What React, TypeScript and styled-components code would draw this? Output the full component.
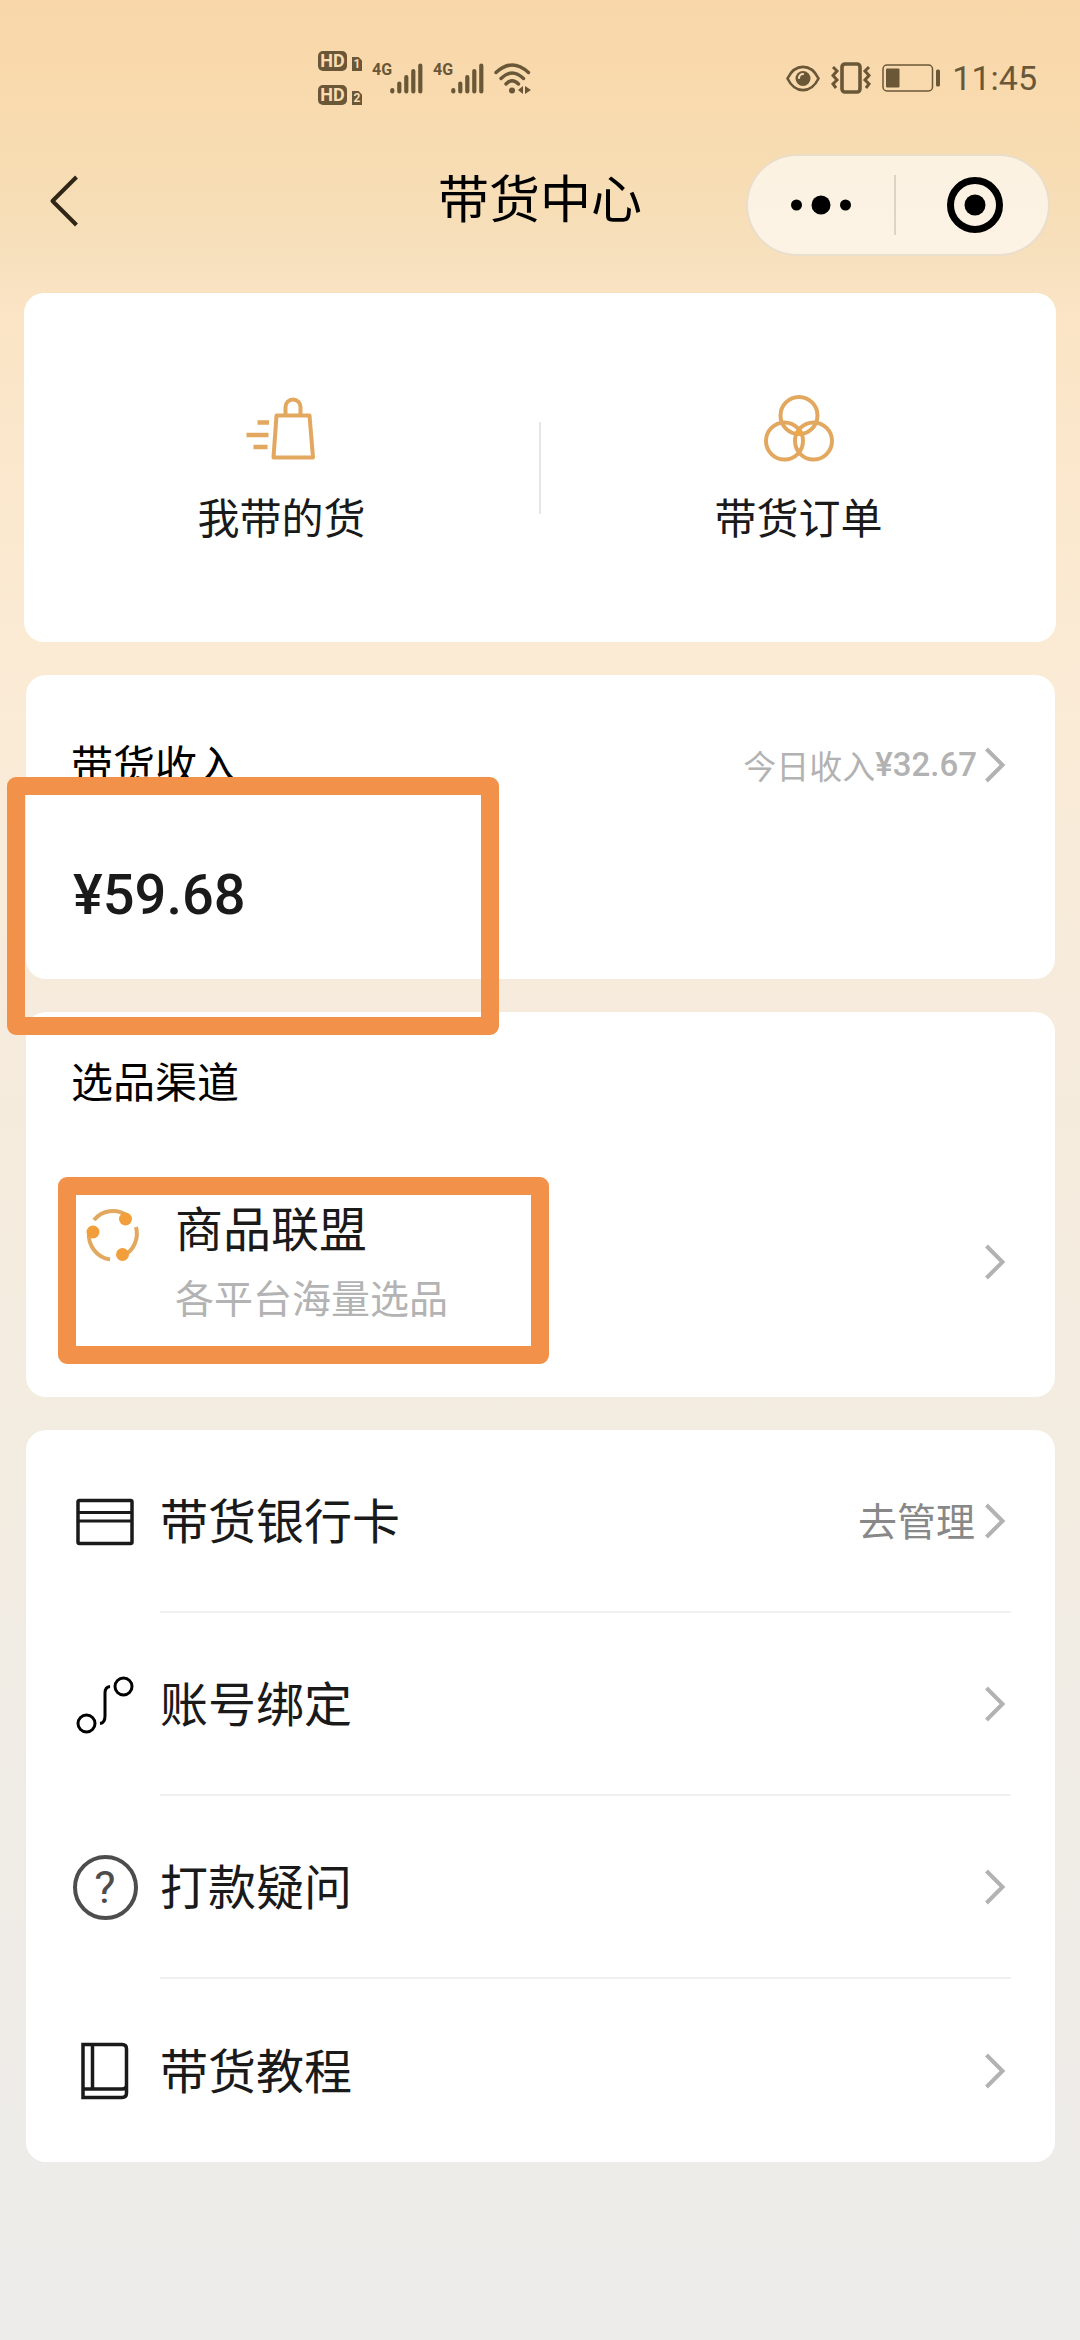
import React from "react";
import styled, { createGlobalStyle } from "styled-components";

const cjk = '"Noto Sans CJK SC", sans-serif';
const latin = 'Roboto, "Noto Sans CJK SC", sans-serif';
const statusInk = "#6a5737";
const gold = "#e3a85f";

const GlobalStyle = createGlobalStyle`
  *, *::before, *::after { box-sizing: border-box; }
  body {
    margin: 0;
    background: #edece9;
    font-family: ${cjk};
    color: #1a1a1a;
  }
  h1, h2, p, ul { margin: 0; padding: 0; font-weight: 400; }
  button { border: 0; padding: 0; background: none; font: inherit; color: inherit; }
  a { color: inherit; text-decoration: none; }
  svg { display: block; flex: none; }
`;

const Page = styled.div`
  min-height: 100vh;
  overflow-x: hidden;
  background: linear-gradient(
    180deg,
    #f9d7a9 0,
    #f8dcb1 150px,
    #f6dfba 240px,
    #fae4c5 310px,
    #fbebd5 660px,
    #f6ebdc 1000px,
    #f3ece0 1410px,
    #f0ece6 1800px,
    #edecea 100%
  );
`;

const StatusBar = styled.div`
  display: flex;
  align-items: center;
  justify-content: space-between;
  height: 154px;
  padding: 2px 43px 0 318px;
  color: ${statusInk};
  font-family: ${latin};
`;

const StatusGroup = styled.div<{ $gap: number }>`
  display: flex;
  align-items: center;
  gap: ${(p) => p.$gap}px;
`;

const HdStack = styled.div`
  display: flex;
  flex-direction: column;
  gap: 14px;
`;

const HdLine = styled.div`
  display: flex;
  align-items: flex-end;
  gap: 5px;
  color: #f9dcb2;
  font-weight: 700;
`;

const HdTag = styled.span`
  width: 29px;
  height: 20px;
  border-radius: 5px;
  background: ${statusInk};
  font-size: 18px;
  line-height: 20px;
  text-align: center;
`;

const SimTag = styled.span`
  width: 10px;
  height: 14px;
  background: ${statusInk};
  clip-path: polygon(0 0, 65% 0, 100% 25%, 100% 100%, 0 100%);
  font-size: 12px;
  line-height: 14px;
  text-align: center;
`;

const Network = styled.div`
  display: flex;
  align-items: flex-start;
`;

const NetworkLabel = styled.span`
  width: 18px;
  font-size: 16px;
  font-weight: 700;
  line-height: 14px;
`;

const Clock = styled.span`
  font-size: 34px;
  line-height: 40px;
`;

const NavBar = styled.header`
  display: grid;
  grid-template-columns: 1fr auto 1fr;
  align-items: start;
  padding: 0 30px 37px;
`;

const BackButton = styled.button`
  display: flex;
  align-items: center;
  width: 62px;
  height: 94px;
  padding-left: 14px;
`;

const Title = styled.h1`
  font-size: 51px;
  line-height: 84px;
  color: #000;
`;

const Capsule = styled.div`
  justify-self: end;
  display: flex;
  align-items: center;
  width: 304px;
  height: 102px;
  border: 2px solid rgba(120, 90, 50, 0.14);
  border-radius: 51px;
  background: rgba(255, 255, 255, 0.62);
`;

const CapsuleButton = styled.button`
  flex: 1;
  display: flex;
  align-items: center;
  justify-content: center;
  height: 100%;

  & + & {
    position: relative;
    padding-left: 8px;
  }
  & + &::before {
    content: "";
    position: absolute;
    left: 0;
    width: 2px;
    height: 60px;
    background: #ddd3c6;
  }
`;

const Content = styled.main`
  display: flex;
  flex-direction: column;
  gap: 33px;
  padding: 0 25px 178px 26px;
`;

const Card = styled.section`
  position: relative;
  border-radius: 20px;
  background: #fff;
`;

const ShortcutCard = styled(Card)`
  display: grid;
  grid-template-columns: 1fr 2px 1fr;
  align-items: center;
  margin: 0 -1px 0 -2px;
  padding: 100px 0;
`;

const Shortcut = styled.a`
  display: flex;
  flex-direction: column;
  align-items: center;
  gap: 27px;
  padding-bottom: 2px;
  font-size: 42px;
  line-height: 48px;
`;

const ShortcutDivider = styled.span`
  height: 92px;
  background: #e6e6e6;
`;

const IncomeCard = styled(Card)`
  padding: 60px 44px 52px 45px;
`;

const IncomeHeader = styled.div`
  display: flex;
  align-items: flex-start;
  justify-content: space-between;
  margin-bottom: 68px;
`;

const SectionTitle = styled.h2`
  font-size: 42px;
  line-height: 56px;
  color: #000;
`;

const TodayLink = styled.a`
  display: flex;
  align-items: center;
  color: #b2b2b2;
  font-size: 33px;
  line-height: 60px;
`;

const TodayAmount = styled.span`
  padding-right: 2px;
  font-family: ${latin};
  font-weight: 500;
`;

const Amount = styled.p`
  padding-left: 2px;
  font-family: ${latin};
  font-size: 56px;
  font-weight: 500;
  line-height: 64px;
`;

const ChannelCard = styled(Card)`
  padding: 40px 44px 71px 45px;
`;

const ChannelLink = styled.a`
  display: flex;
  align-items: center;
  gap: 28px;
  margin-top: 90px;
  padding-left: 8px;
`;

const ChannelIcon = styled.span`
  align-self: flex-start;
  padding-top: 3px;
`;

const ChannelText = styled.span`
  flex: 1;
  display: flex;
  flex-direction: column;
  gap: 18px;
  padding-bottom: 6px;
`;

const ChannelName = styled.span`
  font-size: 48px;
  line-height: 56px;
`;

const ChannelNote = styled.span`
  color: #b3b3b3;
  font-size: 39px;
  line-height: 48px;
`;

const MenuCard = styled(Card)`
  padding: 0 44px 0 46px;
`;

const MenuList = styled.ul`
  list-style: none;
`;

const MenuItem = styled.li`
  &:not(:last-child) > a > :last-child {
    border-bottom: 2px solid #f0f0f0;
  }
`;

const MenuLink = styled.a`
  display: flex;
  align-items: center;
  gap: 22px;
`;

const MenuIcon = styled.span`
  display: flex;
  justify-content: center;
  width: 66px;
`;

const MenuBody = styled.span`
  flex: 1;
  display: flex;
  align-items: center;
  height: 183px;
  font-size: 48px;
`;

const MenuLabel = styled.span`
  flex: 1;
  padding-bottom: 6px;
`;

const MenuHint = styled.span`
  padding: 0 4px 3px 0;
  color: #888;
  font-size: 39px;
`;

const HelpBadge = styled.span`
  width: 65px;
  height: 65px;
  border: 4px solid #4d4d4d;
  border-radius: 50%;
  color: #4d4d4d;
  font-family: ${latin};
  font-size: 45px;
  line-height: 58px;
  text-align: center;
`;

const Highlight = styled.div<{ $left: number; $top: number; $width: number; $height: number }>`
  position: absolute;
  z-index: 1;
  left: ${(p) => p.$left}px;
  top: ${(p) => p.$top}px;
  width: ${(p) => p.$width}px;
  height: ${(p) => p.$height}px;
  border: 18px solid #f1914a;
  border-radius: 9px;
  pointer-events: none;
`;

const Chevron = () => (
  <svg width="32" height="40" viewBox="0 0 32 40" fill="none" stroke="#b2b2b2" strokeWidth="4" aria-hidden="true">
    <path d="M7.5 4 L23.5 20 L7.5 36" />
  </svg>
);

const SignalBars = () => (
  <svg width="33" height="31" viewBox="0 0 33 31" stroke={statusInk} strokeWidth="4.2" strokeLinecap="round" aria-hidden="true">
    <path d="M2.3 27v1.5M9.3 20.5v8M16.3 14v14.5M23.3 8v20.5M30.3 2.5v26" />
  </svg>
);

const Wifi = () => (
  <svg width="37" height="31" viewBox="0 0 37 31" fill="none" stroke={statusInk} strokeWidth="3.4" strokeLinecap="round" aria-hidden="true">
    <path d="M2 9.5Q18 -5.5 34.5 9.5M7 15.5Q18 4.5 29.5 15.5M12 21Q18 14.5 24.5 21" />
    <circle cx="18" cy="27.5" r="3" fill={statusInk} stroke="none" />
    <path d="M29 23v8l-5-4zM31 23v8l6-4z" fill={statusInk} stroke="none" />
  </svg>
);

const Eye = () => (
  <svg width="34" height="27" viewBox="0 0 34 27" aria-hidden="true">
    <path d="M1.5 13.5C9 -2 25 -2 32.5 13.5C25 29 9 29 1.5 13.5Z" fill="none" stroke={statusInk} strokeWidth="2.6" />
    <circle cx="17" cy="13.5" r="7.5" fill={statusInk} />
    <path d="M13 13a4 4 0 0 1 4-4" fill="none" stroke="#f9dcb2" strokeWidth="2.2" strokeLinecap="round" />
  </svg>
);

const Vibrate = () => (
  <svg width="40" height="32" viewBox="0 0 40 32" fill="none" stroke={statusInk} aria-hidden="true">
    <rect x="11" y="2" width="18" height="28" rx="3" strokeWidth="3.6" />
    <path d="M2 5l4 4-4 4.500 4 4.500-4 4 3 4M38 5l-4 4 4 4.500-4 4.500 4 4-3 4" strokeWidth="3" />
  </svg>
);

const Battery = () => (
  <svg width="59" height="28" viewBox="0 0 59 28" aria-hidden="true">
    <rect x="1" y="1" width="49.5" height="26" rx="4" fill="none" stroke={statusInk} strokeWidth="1.5" />
    <rect x="4" y="4.5" width="13.5" height="19" rx="1" fill={statusInk} />
    <rect x="54" y="5.5" width="4" height="17" rx="1.5" fill={statusInk} />
  </svg>
);

const BackIcon = () => (
  <svg width="40" height="56" viewBox="0 0 40 56" fill="none" stroke="#2f2615" strokeWidth="4" strokeLinejoin="round" aria-hidden="true">
    <path d="M32.5 4L8.5 28L32.5 52" />
  </svg>
);

const MoreIcon = () => (
  <svg width="62" height="20" viewBox="0 0 62 20" aria-hidden="true">
    <circle cx="6.5" cy="10" r="5.5" />
    <circle cx="31" cy="10" r="9.5" />
    <circle cx="55.5" cy="10" r="5.5" />
  </svg>
);

const CloseIcon = () => (
  <svg width="58" height="58" viewBox="0 0 58 58" aria-hidden="true">
    <circle cx="29" cy="29" r="24.5" fill="none" stroke="#000" strokeWidth="7" />
    <circle cx="29" cy="29" r="10.5" />
  </svg>
);

const BagIcon = () => (
  <svg width="72" height="72" viewBox="0 0 72 72" fill="none" stroke={gold} strokeWidth="4" aria-hidden="true">
    <path d="M30.500 22.500H63.500L67 64.500H27.500Z" strokeLinejoin="round" />
    <path d="M39.500 22v-8a7.500 7.500 0 0 1 15 0v8" />
    <path d="M11.500 29.500H23M.5 42H22.500M7.500 54H21.500" strokeWidth="4.500" />
  </svg>
);

const CirclesIcon = () => (
  <svg width="72" height="72" viewBox="0 0 72 72" fill="none" stroke={gold} strokeWidth="4" aria-hidden="true">
    <circle cx="36" cy="22.5" r="18.5" />
    <circle cx="21.5" cy="48" r="18.5" />
    <circle cx="50.5" cy="48" r="18.5" />
    <circle cx="36" cy="39.5" r="3" fill="#f2a747" stroke="none" />
  </svg>
);

const AllianceIcon = () => (
  <svg width="68" height="68" viewBox="0 0 68 68" fill="none" stroke={gold} strokeWidth="4" aria-hidden="true">
    <path d="M15 19A24.500 24.500 0 0 1 48 14.500M57 26A25 25 0 0 1 44 55M31 58.500A25 25 0 0 1 10 31" />
    <g fill="#f29f3b" stroke="none">
      <circle cx="46.5" cy="18" r="6.5" />
      <circle cx="14" cy="31" r="6.5" />
      <circle cx="43.5" cy="53.5" r="6.5" />
    </g>
  </svg>
);

const BankCardIcon = () => (
  <svg width="58" height="48" viewBox="0 0 58 48" fill="none" stroke="#1a1a1a" strokeWidth="3.5" aria-hidden="true">
    <rect x="2" y="2.5" width="54" height="43" rx="1.5" />
    <path d="M2 14.500h54M2 23h54" strokeWidth="3" />
  </svg>
);

const BindIcon = () => (
  <svg width="58" height="58" viewBox="0 0 58 58" fill="none" stroke="#000" strokeWidth="3" aria-hidden="true">
    <circle cx="47.5" cy="10.5" r="8.5" />
    <circle cx="10.5" cy="47.5" r="8.5" />
    <path d="M34 10.500Q29 11 29 17V40Q29 47 24 47.500" />
  </svg>
);

const BookIcon = () => (
  <svg width="48" height="58" viewBox="0 0 48 58" fill="none" stroke="#1a1a1a" strokeWidth="3.5" aria-hidden="true">
    <path d="M2 2.500H41Q45.500 2.500 45.500 7V51Q45.500 55.500 41 55.500H2ZM11.500 2.500V47M2 47H41Q45.500 47 45.500 43" />
  </svg>
);

const menu = [
  { label: "带货银行卡", hint: "去管理", icon: <BankCardIcon /> },
  { label: "账号绑定", icon: <BindIcon /> },
  { label: "打款疑问", icon: <HelpBadge aria-hidden="true">?</HelpBadge> },
  { label: "带货教程", icon: <BookIcon /> },
];

export default function App() {
  return (
    <>
      <GlobalStyle />
      <Page>
        <StatusBar>
          <StatusGroup $gap={10}>
            <HdStack>
              {[1, 2].map((sim) => (
                <HdLine key={sim}>
                  <HdTag>HD</HdTag>
                  <SimTag>{sim}</SimTag>
                </HdLine>
              ))}
            </HdStack>
            {[1, 2].map((sim) => (
              <Network key={sim}>
                <NetworkLabel>4G</NetworkLabel>
                <SignalBars />
              </Network>
            ))}
            <Wifi />
          </StatusGroup>
          <StatusGroup $gap={11}>
            <Eye />
            <Vibrate />
            <Battery />
            <Clock>11:45</Clock>
          </StatusGroup>
        </StatusBar>

        <NavBar>
          <BackButton type="button" aria-label="返回">
            <BackIcon />
          </BackButton>
          <Title>带货中心</Title>
          <Capsule>
            <CapsuleButton type="button" aria-label="更多">
              <MoreIcon />
            </CapsuleButton>
            <CapsuleButton type="button" aria-label="关闭">
              <CloseIcon />
            </CapsuleButton>
          </Capsule>
        </NavBar>

        <Content>
          <ShortcutCard>
            <Shortcut href="#goods">
              <BagIcon />
              我带的货
            </Shortcut>
            <ShortcutDivider />
            <Shortcut href="#orders">
              <CirclesIcon />
              带货订单
            </Shortcut>
          </ShortcutCard>

          <IncomeCard>
            <IncomeHeader>
              <SectionTitle>带货收入</SectionTitle>
              <TodayLink href="#today">
                今日收入<TodayAmount>¥32.67</TodayAmount>
                <Chevron />
              </TodayLink>
            </IncomeHeader>
            <Amount>¥59.68</Amount>
            <Highlight $left={-19} $top={102} $width={492} $height={258} />
          </IncomeCard>

          <ChannelCard>
            <SectionTitle>选品渠道</SectionTitle>
            <ChannelLink href="#alliance">
              <ChannelIcon>
                <AllianceIcon />
              </ChannelIcon>
              <ChannelText>
                <ChannelName>商品联盟</ChannelName>
                <ChannelNote>各平台海量选品</ChannelNote>
              </ChannelText>
              <Chevron />
            </ChannelLink>
            <Highlight $left={32} $top={165} $width={491} $height={187} />
          </ChannelCard>

          <MenuCard>
            <MenuList>
              {menu.map((item) => (
                <MenuItem key={item.label}>
                  <MenuLink href="#menu">
                    <MenuIcon>{item.icon}</MenuIcon>
                    <MenuBody>
                      <MenuLabel>{item.label}</MenuLabel>
                      {item.hint && <MenuHint>{item.hint}</MenuHint>}
                      <Chevron />
                    </MenuBody>
                  </MenuLink>
                </MenuItem>
              ))}
            </MenuList>
          </MenuCard>
        </Content>
      </Page>
    </>
  );
}
